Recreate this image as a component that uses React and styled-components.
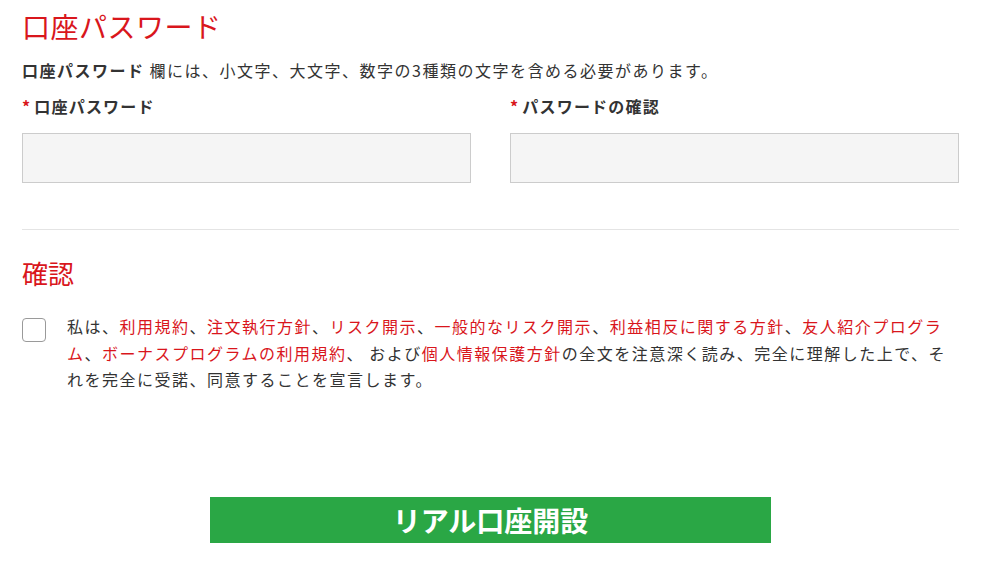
import React from 'react';
import styled, { createGlobalStyle } from 'styled-components';

const colors = {
	red: '#d9161c',
	text: '#333333',
	green: '#2aa745',
	field: '#f5f5f5',
	fieldBorder: '#cccccc',
	rule: '#e4e4e4',
};

const GlobalStyle = createGlobalStyle`
	body {
		margin: 0;
		background: #fff;
		font-family: 'Noto Sans CJK JP', 'Noto Sans', sans-serif;
		color: ${colors.text};
	}
`;

const Page = styled.div`
	width: 937px;
	padding: 8px 24px 34px 22px;
`;

const Heading = styled.h2`
	margin: ${({ margin }) => margin || '0'};
	font-size: ${({ size }) => size || '26px'};
	line-height: 36px;
	font-weight: 400;
	letter-spacing: ${({ spacing }) => spacing || '0'};
	color: ${colors.red};
`;

const Note = styled.p`
	margin: 14px 0 0;
	font-size: 16px;
	line-height: 24px;
	letter-spacing: 1.5px;
	b {
		font-weight: 700;
	}
`;

const Fields = styled.div`
	display: grid;
	grid-template-columns: 1fr 1fr;
	column-gap: 39px;
	margin-top: 12px;
`;

const Field = styled.div`
	display: flex;
	flex-direction: column;
`;

const Label = styled.label`
	font-size: 16px;
	line-height: 24px;
	font-weight: 700;
	letter-spacing: 1.2px;
	span {
		color: ${colors.red};
		margin-right: 3px;
	}
`;

const Input = styled.input`
	box-sizing: border-box;
	margin-top: 15px;
	height: 50px;
	width: 100%;
	background: ${colors.field};
	border: 1px solid ${colors.fieldBorder};
	outline: none;
	font-size: 16px;
	padding: 0 12px;
`;

const Rule = styled.hr`
	margin: 46px 0 0;
	border: 0;
	border-top: 1px solid ${colors.rule};
`;

const Agree = styled.div`
	display: flex;
	align-items: flex-start;
	gap: 21px;
	margin-top: 22px;
`;

const Box = styled.span`
	flex: none;
	box-sizing: border-box;
	width: 24px;
	height: 24px;
	margin-top: 5px;
	border: 1px solid #9a9a9a;
	border-radius: 4px;
	background: #fff;
`;

const Terms = styled.p`
	margin: 0;
	width: 886px;
	font-size: 16px;
	line-height: 26.5px;
	letter-spacing: 1.5px;
`;

const Red = styled.a`
	color: ${colors.red};
	text-decoration: none;
`;

const Submit = styled.button`
	display: block;
	margin: 104px auto 0;
	width: 561px;
	height: 46px;
	border: 0;
	background: ${colors.green};
	color: #fff;
	font-family: inherit;
	font-size: 28px;
	font-weight: 700;
	line-height: 46px;
	padding: 0;
`;

function App() {
	return (
		<Page>
			<GlobalStyle />
			<Heading size="28px" spacing="0.5px">口座パスワード</Heading>
			<Note>
				<b>口座パスワード</b> 欄には、小文字、大文字、数字の3種類の文字を含める必要があります。
			</Note>
			<Fields>
				<Field>
					<Label><span>*</span>口座パスワード</Label>
					<Input type="password" />
				</Field>
				<Field>
					<Label><span>*</span>パスワードの確認</Label>
					<Input type="password" />
				</Field>
			</Fields>
			<Rule />
			<Heading margin="25px 0 0">確認</Heading>
			<Agree>
				<Box />
				<Terms>
					私は、<Red>利用規約</Red>、<Red>注文執行方針</Red>、<Red>リスク開示</Red>、<Red>一般的なリスク開示</Red>、<Red>利益相反に関する方針</Red>、<Red>友人紹介プログラム</Red>、<Red>ボーナスプログラムの利用規約</Red>、 および<Red>個人情報保護方針</Red>の全文を注意深く読み、完全に理解した上で、それを完全に受諾、同意することを宣言します。
				</Terms>
			</Agree>
			<Submit>リアル口座開設</Submit>
		</Page>
	);
}

export default App;
